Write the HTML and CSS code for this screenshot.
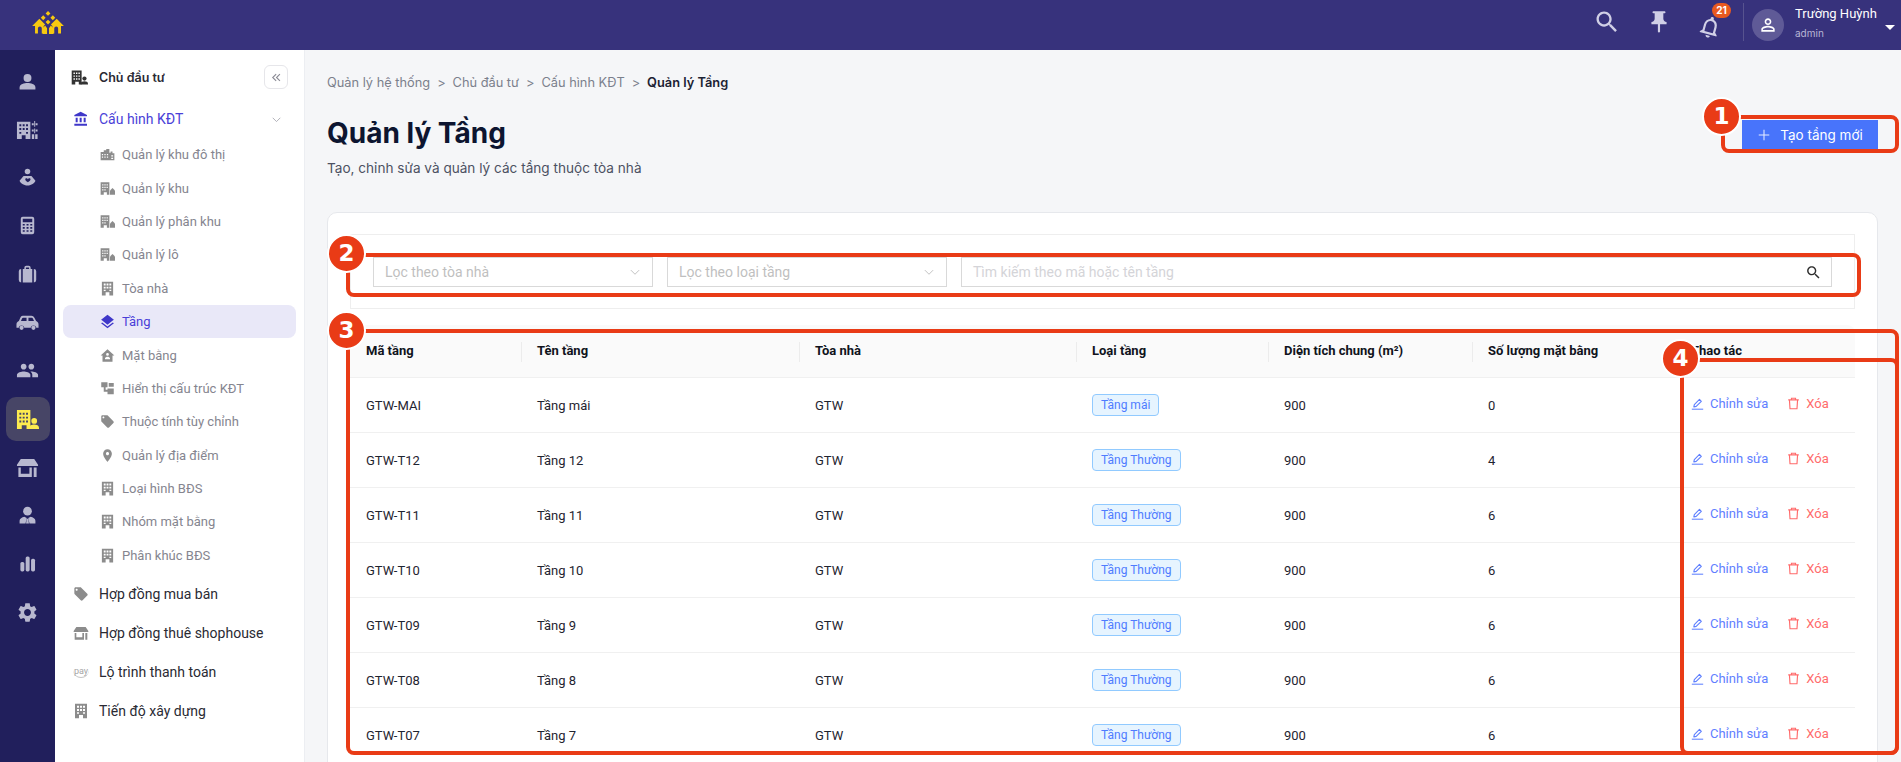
FILE: index.html
```html
<!DOCTYPE html>
<html lang="vi">
  <head>
    <meta charset="UTF-8" />
    <title>Quản lý Tầng</title>
    <link rel="stylesheet" href="styles.css">
  </head>
  <body>
    <svg class="sprite" xmlns="http://www.w3.org/2000/svg">
      <symbol id="i-person" viewBox="0 0 24 24"><circle cx="12" cy="7.500" r="5"/><path d="M2 22v-2.500C2 15.500 8 14 12 14s10 1.500 10 5.500V22z"/></symbol>
      <symbol id="i-city" viewBox="0 0 24 24"><path fill-rule="evenodd" d="M1 4h14v18H10v-4H6v4H1zM3.500 6.500v2h2v-2zm3.500 0v2h2v-2zm3.500 0v2h2v-2zM3.500 10.500v2h2v-2zm3.500 0v2h2v-2zm3.500 0v2h2v-2zM3.500 14.500v2h2v-2zm7 0v2h2v-2z"/><path d="M19 3h1v6h-1zM16.500 5.500h2v2h-2zM20.500 5.500h2v2h-2zM19 11h1v5h-1zM16.500 12h2v2h-2zM20.500 12h2v2h-2zM16.500 17h2.500v5h-2.500zM20 17h2.500v5H20z"/></symbol>
      <symbol id="i-care" viewBox="0 0 24 24"><circle cx="12" cy="4.500" r="3.500"/><path d="M7 10h10l5 6c-1 3-5 6-10 6S3 19 2 16z"/><path fill="#211f5c" d="M14.500 13c-1 0-1.500.6-2 1.200-.5-.6-1-1.200-2-1.200-2 0-2 3 2 5 4-2 4-5 2-5z"/></symbol>
      <symbol id="i-calc" viewBox="0 0 24 24"><path fill-rule="evenodd" d="M6 1h12a2.500 2.500 0 0 1 2.500 2.500v17A2.500 2.500 0 0 1 18 23H6a2.500 2.500 0 0 1-2.500-2.500v-17A2.500 2.500 0 0 1 6 1zm0 2.500V8h12V3.500zM6 10v2h2.500v-2zm4.800 0v2h2.500v-2zm4.700 0v2H18v-2zM6 14v2h2.500v-2zm4.800 0v2h2.500v-2zm4.700 0v2H18v-2zM6 18v2h2.500v-2zm4.800 0v2h2.500v-2zm4.700 0v2H18v-2z"/></symbol>
      <symbol id="i-case" viewBox="0 0 24 24"><path fill-rule="evenodd" d="M8 5V3.500A2.500 2.500 0 0 1 10.500 1h3A2.500 2.500 0 0 1 16 3.500V5h2v17H6V5zm2 0h4V3.500a.5.5 0 0 0-.5-.5h-3a.5.5 0 0 0-.5.5z"/><path d="M1 8a3 3 0 0 1 3-3v17a3 3 0 0 1-3-3zM23 8a3 3 0 0 0-3-3v17a3 3 0 0 0 3-3z"/></symbol>
      <symbol id="i-car" viewBox="0 0 24 24"><path fill-rule="evenodd" d="M7 5h9c1.500 0 2.500.8 3.200 2l1.800 3.500c1.200.6 2.500 1.500 2.500 3.500v3.500h-2.300a3 3 0 0 0-5.900 0H8.700a3 3 0 0 0-5.900 0H.5V14c0-2 1.300-3 2.500-3.500L4.500 7C5 5.800 5.800 5 7 5zm.5 2c-.6 0-1 .3-1.200.8L5.200 10.500h5.800V7zM13 7v3.500h5.800l-1.200-2.800C17.400 7.300 17 7 16.500 7z"/><circle cx="5.800" cy="17.500" r="2.200"/><circle cx="18.200" cy="17.500" r="2.200"/></symbol>
      <symbol id="i-group" viewBox="0 0 24 24"><path d="M16 11c1.660 0 2.990-1.340 2.990-3S17.660 5 16 5c-1.660 0-3 1.340-3 3s1.340 3 3 3zm-8 0c1.660 0 2.990-1.340 2.990-3S9.660 5 8 5C6.340 5 5 6.340 5 8s1.340 3 3 3zm0 2c-2.330 0-7 1.170-7 3.500V19h14v-2.500c0-2.330-4.670-3.500-7-3.500zm8 0c-.29 0-.62.02-.97.05 1.160.84 1.970 1.970 1.970 3.450V19h6v-2.500c0-2.330-4.670-3.500-7-3.500z"/></symbol>
      <symbol id="i-owner" viewBox="0 0 24 24"><path fill-rule="evenodd" d="M1 2h14v20h-4v-4H6v4H1zM3.500 5v2h2V5zm3.500 0v2h2V5zm3.500 0v2h2V5zM3.500 9v2h2V9zM7 9v2h2V9zm3.500 0v2h2V9zM3.500 13v2h2v-2zM7 13v2h2v-2zm3.500 0v2h2v-2z"/><circle cx="19" cy="13.500" r="3"/><path d="M13.500 22v-1.500c0-2 3-3.200 5.500-3.200s5 1.200 5 3.200V22z"/></symbol>
      <symbol id="i-store" viewBox="0 0 24 24"><path fill-rule="evenodd" d="M5 3h14l4 6v1.500H1V9zM2.500 12h14v10h-14zm2.500 0v6.500h9V12zM18.500 12H21.500v10h-3z"/></symbol>
      <symbol id="i-agent" viewBox="0 0 24 24"><circle cx="12" cy="6.500" r="5.500"/><path fill-rule="evenodd" d="M8 13.500l3 1.500-1.500 7H2v-3.500c0-2.500 3-4.500 6-5zM16 13.500l-3 1.500 1.500 7H22v-3.500c0-2.500-3-4.500-6-5zM11 16h2l.8 6h-3.600z"/></symbol>
      <symbol id="i-chart" viewBox="0 0 24 24"><rect x="3" y="10" width="5" height="12" rx="2"/><rect x="9.700" y="3" width="5" height="19" rx="2"/><rect x="16.500" y="6" width="5" height="16" rx="2"/></symbol>
      <symbol id="i-gear" viewBox="0 0 24 24"><path d="M19.140 12.940c.04-.3.06-.61.06-.94 0-.32-.02-.64-.07-.94l2.030-1.580c.18-.14.23-.41.12-.61l-1.920-3.320c-.12-.22-.37-.29-.59-.22l-2.390.96c-.5-.38-1.030-.7-1.620-.94l-.36-2.540c-.04-.24-.24-.41-.48-.41h-3.840c-.24 0-.43.17-.47.41l-.36 2.540c-.59.24-1.130.57-1.620.94l-2.390-.96c-.22-.08-.47 0-.59.22L2.740 8.870c-.12.21-.08.47.12.61l2.030 1.580c-.05.3-.09.63-.09.94s.02.64.07.94l-2.030 1.580c-.18.14-.23.41-.12.61l1.920 3.320c.12.22.37.29.59.22l2.390-.96c.5.38 1.030.7 1.620.94l.36 2.540c.05.24.24.41.48.41h3.840c.24 0 .44-.17.47-.41l.36-2.540c.59-.24 1.130-.56 1.620-.94l2.390.96c.22.08.47 0 .59-.22l1.920-3.320c.12-.22.07-.47-.12-.61l-2.010-1.580zM12 15.600c-1.980 0-3.600-1.620-3.600-3.600s1.620-3.600 3.600-3.600 3.600 1.620 3.600 3.600-1.620 3.600-3.600 3.600z"/></symbol>
      <symbol id="i-search" viewBox="0 0 24 24"><path d="M15.500 14h-.79l-.28-.27C15.410 12.590 16 11.110 16 9.500 16 5.910 13.090 3 9.500 3S3 5.910 3 9.500 5.910 16 9.500 16c1.610 0 3.090-.59 4.230-1.570l.27.28v.79l5 4.990L20.490 19l-4.990-5zm-6 0C7.010 14 5 11.990 5 9.500S7.010 5 9.500 5 14 7.010 14 9.500 11.990 14 9.500 14z"/></symbol>
      <symbol id="i-pin" viewBox="0 0 24 24"><path d="M16 9V4h1c.55 0 1-.45 1-1s-.45-1-1-1H7c-.55 0-1 .45-1 1s.45 1 1 1h1v5c0 1.660-1.340 3-3 3v2h5.970v7l1 1 1-1v-7H19v-2c-1.660 0-3-1.340-3-3z"/></symbol>
      <symbol id="i-bell" viewBox="0 0 24 24"><path d="M12 22c1.100 0 2-.9 2-2h-4c0 1.100.9 2 2 2zm6-6v-5c0-3.070-1.630-5.640-4.500-6.320V4c0-.83-.67-1.500-1.500-1.500s-1.500.67-1.500 1.500v.68C7.640 5.360 6 7.920 6 11v5l-2 2v1h16v-1l-2-2zm-2 1H8v-6c0-2.480 1.510-4.500 4-4.500s4 2.020 4 4.500v6z"/></symbol>
      <symbol id="i-user-line" viewBox="0 0 24 24"><path d="M12 5.900c1.160 0 2.100.94 2.100 2.100s-.94 2.100-2.100 2.100S9.900 9.160 9.900 8s.94-2.100 2.100-2.100m0 9c2.970 0 6.100 1.460 6.100 2.100v1.100H5.900V17c0-.64 3.130-2.100 6.100-2.100M12 4C9.790 4 8 5.790 8 8s1.790 4 4 4 4-1.790 4-4-1.790-4-4-4zm0 9c-2.670 0-8 1.340-8 4v3h16v-3c0-2.660-5.330-4-8-4z"/></symbol>
      <symbol id="i-bank" viewBox="0 0 24 24"><path d="M4 10v7h3v-7H4zm6 0v7h3v-7h-3zM2 22h19v-3H2v3zm14-12v7h3v-7h-3zm-4.500-9L2 6v2h19V6l-9.500-5z"/></symbol>
      <symbol id="i-blocks" viewBox="0 0 24 24"><path fill-rule="evenodd" d="M1 8h5V5h4V3h5v6h2V7h3v3h3v11H1zM3 11v2h2v-2zm4 0v2h2v-2zm4 0v2h2v-2zm7 2v2h3v-2zM3 15v2h2v-2zm4 0v2h2v-2zm4 0v2h2v-2zm7 2v2h3v-2z"/></symbol>
      <symbol id="i-zone" viewBox="0 0 24 24"><path fill-rule="evenodd" d="M1 2h14v20h-4v-4H6v4H1zM3.500 5v2h2V5zm3.500 0v2h2V5zm3.500 0v2h2V5zM3.500 9v2h2V9zM7 9v2h2V9zm3.500 0v2h2V9zM3.500 13v2h2v-2zM7 13v2h2v-2z"/><path d="M16 15l4-4 4 4v7h-8z"/></symbol>
      <symbol id="i-tower" viewBox="0 0 24 24"><path fill-rule="evenodd" d="M3 1h18v22h-6v-5H9v5H3zM6 4v3h3V4zm4.500 0v3h3V4zM15 4v3h3V4zM6 9v3h3V9zm4.500 0v3h3V9zM15 9v3h3V9zM6 14v2h3v-2zm9 0v2h3v-2z"/></symbol>
      <symbol id="i-layers" viewBox="3 1 18 21"><path d="M11.990 18.540l-7.370-5.730L3 14.070l9 7 9-7-1.630-1.270-7.380 5.740zM12 16l7.360-5.730L21 9l-9-7-9 7 1.630 1.270L12 16z"/></symbol>
      <symbol id="i-house" viewBox="0 0 24 24"><path fill-rule="evenodd" d="M12 2l11 10h-3v10H4V12H1zm0 6a2.200 2.200 0 1 0 0 4.400A2.200 2.200 0 0 0 12 8zm-4 10h8v-1.500c0-1.500-2.500-2.500-4-2.500s-4 1-4 2.500z"/></symbol>
      <symbol id="i-tree" viewBox="0 0 24 24"><path fill-rule="evenodd" d="M2 2h10v8H9v4h3v-2h10v9H12v-4H6V10H2zM14 3h8v6h-8z"/></symbol>
      <symbol id="i-tag" viewBox="0 0 24 24"><path d="M21.410 11.580l-9-9C12.050 2.220 11.550 2 11 2H4c-1.100 0-2 .9-2 2v7c0 .55.22 1.050.59 1.420l9 9c.36.36.86.58 1.410.58s1.050-.22 1.410-.59l7-7c.37-.36.59-.86.59-1.410s-.23-1.060-.59-1.420zM5.500 7C4.670 7 4 6.330 4 5.500S4.670 4 5.500 4 7 4.670 7 5.500 6.330 7 5.500 7z"/></symbol>
      <symbol id="i-place" viewBox="0 0 24 24"><path d="M12 2C8.130 2 5 5.130 5 9c0 5.250 7 13 7 13s7-7.750 7-13c0-3.870-3.130-7-7-7zm0 9.500c-1.380 0-2.500-1.120-2.500-2.500s1.120-2.500 2.500-2.500 2.500 1.120 2.500 2.500-1.120 2.500-2.500 2.500z"/></symbol>
      <symbol id="i-edit" viewBox="0 0 16 16"><path d="M1 15h14" fill="none" stroke="currentColor" stroke-width="1.300"/><path d="M3.500 12.200l.6-2.900 6.300-6.300 2.300 2.300-6.300 6.300z" fill="none" stroke="currentColor" stroke-width="1.400" stroke-linejoin="round"/></symbol>
      <symbol id="i-trash" viewBox="0 0 16 16"><path d="M1.500 3.500h13M5.500 3.500V1.500h5v2M3 3.500l.7 11h8.600l.7-11" fill="none" stroke="currentColor" stroke-width="1.400"/></symbol>
    </svg>

    <header class="topbar">
      <svg class="logo" viewBox="0 0 34 26">
        <path d="M16.500 0l2.500 2.500-2.500 2.500L14 2.500zM11.500 4.500L14 7l-2.500 2.500L9 7zM21.500 4.500L24 7l-2.500 2.500L19 7zM16.500 9l2.500 2.500-2.500 2.500-2.500-2.500zM7.500 8l6 6-1.500 1.500v8H3v-8H0zM25.500 8l7.500 7.500h-3v8h-9v-8L19.500 14z"/>
        <path class="logo-door" d="M6 24v-6a2 2 0 0 1 4 0v6zM23 24v-6a2 2 0 0 1 4 0v6z"/>
        <path d="M11 24v-6l2.500-3 2 3v6zM17.500 24v-6l2-3 2.500 3v6z"/>
      </svg>
      <div class="topbar-tools">
        <svg class="tool-icon tool-search"><use href="#i-search"/></svg>
        <svg class="tool-icon"><use href="#i-pin"/></svg>
        <div class="bell">
          <svg class="tool-icon tilt"><use href="#i-bell"/></svg>
          <span class="bell-count">21</span>
        </div>
        <div class="user">
          <div class="avatar"><svg><use href="#i-user-line"/></svg></div>
          <div class="user-text">
            <div class="user-name">Trường Huỳnh</div>
            <div class="user-role">admin</div>
          </div>
          <span class="caret"></span>
        </div>
      </div>
    </header>

    <div class="shell">
      <nav class="rail">
        <a class="rail-item"><svg><use href="#i-person"/></svg></a>
        <a class="rail-item wide"><svg><use href="#i-city"/></svg></a>
        <a class="rail-item"><svg><use href="#i-care"/></svg></a>
        <a class="rail-item"><svg><use href="#i-calc"/></svg></a>
        <a class="rail-item"><svg><use href="#i-case"/></svg></a>
        <a class="rail-item wide"><svg><use href="#i-car"/></svg></a>
        <a class="rail-item wide"><svg><use href="#i-group"/></svg></a>
        <a class="rail-item wide active"><svg><use href="#i-owner"/></svg></a>
        <a class="rail-item wide"><svg><use href="#i-store"/></svg></a>
        <a class="rail-item"><svg><use href="#i-agent"/></svg></a>
        <a class="rail-item"><svg><use href="#i-chart"/></svg></a>
        <a class="rail-item wide"><svg><use href="#i-gear"/></svg></a>
      </nav>

      <aside class="side">
        <div class="side-head">
          <svg class="side-head-icon"><use href="#i-owner"/></svg>
          <span>Chủ đầu tư</span>
          <button class="collapse">
            <svg viewBox="0 0 16 16"><path d="M7.500 3L2.500 8l5 5M13 3L8 8l5 5"/></svg>
          </button>
        </div>
        <div class="menu-item open">
          <svg class="menu-icon"><use href="#i-bank"/></svg>
          <span>Cấu hình KĐT</span>
          <svg class="chev" viewBox="0 0 16 16"><path d="M2.500 5.500L8 11l5.500-5.500"/></svg>
        </div>
        <ul class="sub">
          <li><svg><use href="#i-blocks"/></svg>Quản lý khu đô thị</li>
          <li><svg><use href="#i-zone"/></svg>Quản lý khu</li>
          <li><svg><use href="#i-zone"/></svg>Quản lý phân khu</li>
          <li><svg><use href="#i-zone"/></svg>Quản lý lô</li>
          <li><svg><use href="#i-tower"/></svg>Tòa nhà</li>
          <li class="current"><svg><use href="#i-layers"/></svg>Tầng</li>
          <li><svg><use href="#i-house"/></svg>Mặt bằng</li>
          <li><svg><use href="#i-tree"/></svg>Hiển thị cấu trúc KĐT</li>
          <li><svg><use href="#i-tag"/></svg>Thuộc tính tùy chỉnh</li>
          <li><svg><use href="#i-place"/></svg>Quản lý địa điểm</li>
          <li><svg><use href="#i-tower"/></svg>Loại hình BĐS</li>
          <li><svg><use href="#i-tower"/></svg>Nhóm mặt bằng</li>
          <li><svg><use href="#i-tower"/></svg>Phân khúc BĐS</li>
        </ul>
        <div class="menu-item">
          <svg class="menu-icon"><use href="#i-tag"/></svg>
          <span>Hợp đồng mua bán</span>
        </div>
        <div class="menu-item">
          <svg class="menu-icon"><use href="#i-store"/></svg>
          <span>Hợp đồng thuê shophouse</span>
        </div>
        <div class="menu-item">
          <span class="pay">pay</span>
          <span>Lộ trình thanh toán</span>
        </div>
        <div class="menu-item">
          <svg class="menu-icon"><use href="#i-tower"/></svg>
          <span>Tiến độ xây dựng</span>
        </div>
      </aside>

      <main class="page">
        <div class="crumbs">
          <span>Quản lý hệ thống</span><i>&gt;</i>
          <span>Chủ đầu tư</span><i>&gt;</i>
          <span>Cấu hình KĐT</span><i>&gt;</i>
          <b>Quản lý Tầng</b>
        </div>
        <div class="page-head">
          <div>
            <h1>Quản lý Tầng</h1>
            <p>Tạo, chỉnh sửa và quản lý các tầng thuộc tòa nhà</p>
          </div>
          <button class="btn-new"><svg viewBox="0 0 16 16"><path d="M8 2v12M2 8h12"/></svg>Tạo tầng mới</button>
        </div>

        <section class="card">
          <div class="filters">
            <div class="field select">Lọc theo tòa nhà<svg viewBox="0 0 16 16"><path d="M2.500 5.500L8 11l5.500-5.500"/></svg></div>
            <div class="field select">Lọc theo loại tầng<svg viewBox="0 0 16 16"><path d="M2.500 5.500L8 11l5.500-5.500"/></svg></div>
            <div class="field search">Tìm kiếm theo mã hoặc tên tầng<svg><use href="#i-search"/></svg></div>
          </div>

          <table class="floors">
            <colgroup>
              <col class="c1"><col class="c2"><col class="c3"><col class="c4"><col class="c5"><col class="c6"><col class="c7">
            </colgroup>
            <thead>
              <tr>
                <th>Mã tầng</th><th>Tên tầng</th><th>Tòa nhà</th><th>Loại tầng</th><th>Diện tích chung (m²)</th><th>Số lượng mặt bằng</th><th>Thao tác</th>
              </tr>
            </thead>
            <tbody>
              <tr>
                <td>GTW-MAI</td><td>Tầng mái</td><td>GTW</td><td><span class="tag">Tầng mái</span></td><td>900</td><td>0</td>
                <td><div class="acts"><a class="edit"><svg><use href="#i-edit"/></svg>Chỉnh sửa</a><a class="del"><svg><use href="#i-trash"/></svg>Xóa</a></div></td>
              </tr>
              <tr>
                <td>GTW-T12</td><td>Tầng 12</td><td>GTW</td><td><span class="tag">Tầng Thường</span></td><td>900</td><td>4</td>
                <td><div class="acts"><a class="edit"><svg><use href="#i-edit"/></svg>Chỉnh sửa</a><a class="del"><svg><use href="#i-trash"/></svg>Xóa</a></div></td>
              </tr>
              <tr>
                <td>GTW-T11</td><td>Tầng 11</td><td>GTW</td><td><span class="tag">Tầng Thường</span></td><td>900</td><td>6</td>
                <td><div class="acts"><a class="edit"><svg><use href="#i-edit"/></svg>Chỉnh sửa</a><a class="del"><svg><use href="#i-trash"/></svg>Xóa</a></div></td>
              </tr>
              <tr>
                <td>GTW-T10</td><td>Tầng 10</td><td>GTW</td><td><span class="tag">Tầng Thường</span></td><td>900</td><td>6</td>
                <td><div class="acts"><a class="edit"><svg><use href="#i-edit"/></svg>Chỉnh sửa</a><a class="del"><svg><use href="#i-trash"/></svg>Xóa</a></div></td>
              </tr>
              <tr>
                <td>GTW-T09</td><td>Tầng 9</td><td>GTW</td><td><span class="tag">Tầng Thường</span></td><td>900</td><td>6</td>
                <td><div class="acts"><a class="edit"><svg><use href="#i-edit"/></svg>Chỉnh sửa</a><a class="del"><svg><use href="#i-trash"/></svg>Xóa</a></div></td>
              </tr>
              <tr>
                <td>GTW-T08</td><td>Tầng 8</td><td>GTW</td><td><span class="tag">Tầng Thường</span></td><td>900</td><td>6</td>
                <td><div class="acts"><a class="edit"><svg><use href="#i-edit"/></svg>Chỉnh sửa</a><a class="del"><svg><use href="#i-trash"/></svg>Xóa</a></div></td>
              </tr>
              <tr>
                <td>GTW-T07</td><td>Tầng 7</td><td>GTW</td><td><span class="tag">Tầng Thường</span></td><td>900</td><td>6</td>
                <td><div class="acts"><a class="edit"><svg><use href="#i-edit"/></svg>Chỉnh sửa</a><a class="del"><svg><use href="#i-trash"/></svg>Xóa</a></div></td>
              </tr>
            </tbody>
          </table>
        </section>
      </main>
    </div>

    <!-- annotation marks drawn on top of the screen -->
    <div class="mark-box box1"></div>
    <div class="mark-box box2"></div>
    <div class="mark-box box3"></div>
    <div class="mark-box box4"></div>
    <div class="mark-num num1">1</div>
    <div class="mark-num num2">2</div>
    <div class="mark-num num3">3</div>
    <div class="mark-num num4">4</div>
  </body>
</html>
```

FILE: styles.css
```css
* {
  box-sizing: border-box;
}
html,
body {
  height: 100%;
}
body {
  position: relative;
  margin: 0;
  overflow: hidden;
  font-family: Inter, "Noto Sans", sans-serif;
  font-size: 13px;
  color: #1c2233;
  background: #f5f6f8;
}
.sprite {
  display: none;
}

/* top bar */
.topbar {
  display: flex;
  align-items: center;
  justify-content: space-between;
  height: 50px;
  padding-left: 32px;
  background: #37327c;
}
.logo {
  width: 33px;
  height: 25px;
  margin-top: -3px;
  fill: #f7c910;
}
.logo-door {
  fill: #37327c;
}
.topbar-tools {
  display: flex;
  align-items: center;
  height: 50px;
}
.tool-icon {
  display: block;
  width: 26px;
  height: 26px;
  margin-right: 25px;
  margin-top: -6px;
  fill: #d0cfe6;
}
.tool-search {
  width: 28px;
  height: 28px;
}
.tilt {
  transform: rotate(15deg);
}
.bell {
  position: relative;
  margin-top: 3px;
}
.bell .tool-icon {
  margin-right: 20px;
  margin-top: 0;
}
.bell-count {
  position: absolute;
  top: -11px;
  left: 15px;
  min-width: 19px;
  height: 15px;
  padding: 0 3px;
  border-radius: 8px;
  background: #e8591f;
  color: #fff;
  font-size: 10px;
  font-weight: 700;
  line-height: 15px;
  text-align: center;
}
.user {
  display: flex;
  align-items: center;
  width: 158px;
  height: 38px;
  margin-top: -6px;
  padding-left: 8px;
  border-left: 1px solid #57538f;
}
.avatar {
  display: flex;
  align-items: center;
  justify-content: center;
  width: 32px;
  height: 32px;
  margin-top: 6px;
  border-radius: 50%;
  background: #5f5a97;
}
.avatar svg {
  width: 20px;
  height: 20px;
  fill: #fff;
}
.user-text {
  margin-left: 11px;
  flex: 1;
}
.user-name {
  color: #fff;
  font-family: Roboto, sans-serif;
  font-size: 13px;
  line-height: 18px;
}
.user-role {
  margin-top: 3px;
  color: #b8b6d4;
  font-size: 10px;
  line-height: 14px;
}
.caret {
  width: 0;
  height: 0;
  margin: 10px 6px 0 0;
  border-left: 5px solid transparent;
  border-right: 5px solid transparent;
  border-top: 5px solid #fff;
}

/* layout */
.shell {
  display: flex;
  height: calc(100% - 50px);
}

/* icon rail */
.rail {
  display: flex;
  flex-direction: column;
  align-items: center;
  gap: 4.300px;
  flex: 0 0 55px;
  padding-top: 9px;
  background: #211f5c;
}
.rail-item {
  display: flex;
  align-items: center;
  justify-content: center;
  width: 44px;
  height: 44px;
  border-radius: 10px;
}
.rail-item svg {
  width: 19px;
  height: 19px;
  fill: #b8b8cf;
}
.rail-item.wide svg {
  width: 23px;
  height: 23px;
}
.rail-item.active {
  background: #474566;
}
.rail-item.active svg {
  fill: #fdeb4f;
}

/* tree menu */
.side {
  flex: 0 0 250px;
  font-family: Roboto, sans-serif;
  background: #fff;
  border-right: 1px solid #eceef2;
}
.side-head {
  display: flex;
  align-items: center;
  height: 38px;
  margin-top: 8px;
  padding-left: 16px;
  font-family: Inter, sans-serif;
  font-weight: 600;
  font-size: 12.500px;
  color: #2a2a33;
}
.side-head-icon {
  width: 17px;
  height: 17px;
  margin-right: 11px;
  fill: #333;
}
.collapse {
  display: flex;
  align-items: center;
  justify-content: center;
  width: 24px;
  height: 24px;
  margin-left: auto;
  margin-right: 16px;
  padding: 0;
  background: #fff;
  border: 1px solid #e6e6ea;
  border-radius: 6px;
}
.collapse svg {
  width: 11px;
  height: 11px;
  fill: none;
  stroke: #8a8a94;
  stroke-width: 1.600;
}
.menu-item {
  display: flex;
  align-items: center;
  height: 39px;
  padding-left: 18px;
  font-size: 14px;
  color: #2a2a33;
}
.menu-item.open {
  height: 38px;
  margin-top: 4px;
  color: #4a3fd8;
}
.menu-icon {
  flex: 0 0 16px;
  width: 16px;
  height: 16px;
  margin-right: 10px;
  fill: #8c8c8c;
}
.open .menu-icon {
  fill: #3f37c9;
}
.chev {
  width: 11px;
  height: 11px;
  margin-left: auto;
  margin-right: 22px;
  fill: none;
  stroke: #a9a9b2;
  stroke-width: 1.300;
}
.pay {
  position: relative;
  flex: 0 0 16px;
  margin-right: 10px;
  color: #a5a5a5;
  font-size: 9px;
  line-height: 12px;
  text-align: center;
  border-bottom: 1px solid #c4c4c4;
  border-radius: 0 0 10px 10px;
}
.sub {
  margin: 0 0 2px;
  padding: 0;
  list-style: none;
}
.sub li {
  display: flex;
  align-items: center;
  height: 33.400px;
  margin: 0 8px;
  padding-left: 37px;
  border-radius: 8px;
  color: #85858f;
  font-size: 13px;
}
.sub svg {
  flex: 0 0 15px;
  width: 15px;
  height: 15px;
  margin-right: 7px;
  fill: #8c8c8c;
}
.sub .current {
  background: #e9e8f8;
  color: #4a3fd8;
}
.sub .current svg {
  fill: #3f37c9;
}

/* page */
.page {
  flex: 1;
  min-width: 0;
  height: 100%;
  padding: 24px 23px 0 22px;
  overflow: hidden;
}
.crumbs {
  display: flex;
  align-items: center;
  height: 16px;
  color: #7b808c;
  font-size: 12.800px;
}
.crumbs i {
  margin: 0 7px;
  font-style: normal;
}
.crumbs b {
  color: #1c2233;
  font-weight: 600;
}
.page-head {
  display: flex;
  align-items: flex-start;
  justify-content: space-between;
  height: 122px;
}
.page-head h1 {
  margin: 25px 0 0;
  color: #0d1530;
  font-size: 28px;
  font-weight: 700;
  line-height: 36px;
}
.page-head p {
  margin: 7px 0 0;
  color: #4c5162;
  font-size: 13.600px;
  line-height: 20px;
}
.btn-new {
  display: flex;
  align-items: center;
  justify-content: center;
  width: 136px;
  height: 29px;
  margin-top: 30px;
  padding: 0;
  border: 0;
  background: #4874fb;
  color: #fff;
  font-family: inherit;
  font-size: 13.500px;
}
.btn-new svg {
  width: 14px;
  height: 14px;
  margin-right: 9px;
  fill: none;
  stroke: #e5ebff;
  stroke-width: 1.200;
}

/* card with filters and table, runs on below the fold */
.card {
  height: 560px;
  padding: 21px 22px 0;
  overflow: hidden;
  background: #fff;
  border: 1px solid #e6e8ec;
  border-radius: 10px 10px 0 0;
}
.filters {
  display: flex;
  gap: 14px;
  height: 75px;
  padding: 22px;
  border: 1px solid #eeeeee;
}
.field {
  display: flex;
  align-items: center;
  justify-content: space-between;
  height: 30px;
  padding: 0 11px;
  border: 1px solid #d9d9d9;
  color: #bfbfbf;
  font-family: Roboto, sans-serif;
  font-size: 14px;
}
.select {
  flex: 0 0 280px;
}
.select svg {
  width: 12px;
  height: 12px;
  fill: none;
  stroke: #b5b5b5;
  stroke-width: 1.100;
}
.search {
  flex: 1;
  color: #d4d4d8;
}
.search svg {
  width: 17px;
  height: 17px;
  margin-right: -2px;
  fill: #2d2d2d;
}
.floors {
  width: 1505px;
  margin-top: 16px;
  border-collapse: separate;
  border-spacing: 0;
  font-family: Roboto, sans-serif;
  table-layout: fixed;
}
.c1 { width: 171px; }
.c2 { width: 278px; }
.c3 { width: 277px; }
.c4 { width: 192px; }
.c5 { width: 204px; }
.c6 { width: 203px; }
.c7 { width: 180px; }
.floors th {
  position: relative;
  height: 53px;
  padding: 0 16px 2px;
  background: #fafafa;
  border-bottom: 1px solid #f0f0f0;
  color: #10131c;
  font-size: 13px;
  font-weight: 700;
  text-align: left;
}
.floors th:first-child {
  border-top-left-radius: 8px;
}
.floors th:last-child {
  border-top-right-radius: 8px;
}
.floors th + th::before {
  content: "";
  position: absolute;
  left: 0;
  top: 17px;
  height: 20px;
  border-left: 1px solid #ececec;
}
.floors td {
  height: 55px;
  padding: 0 16px;
  border-bottom: 1px solid #f0f0f0;
  color: #1f2430;
  font-size: 13px;
}
.tag {
  display: inline-block;
  height: 22px;
  padding: 0 8px;
  background: #e6f4ff;
  border: 1px solid #91caff;
  border-radius: 4px;
  color: #4f7cff;
  font-size: 12px;
  line-height: 20px;
}
.acts {
  display: flex;
  align-items: center;
  gap: 19px;
  margin-top: -4px;
}
.acts a {
  display: flex;
  align-items: center;
}
.acts svg {
  width: 13px;
  height: 13px;
  margin-right: 6px;
}
.edit {
  color: #5f80ff;
}
.del {
  color: #ff6b6b;
}

/* annotation marks */
.mark-box {
  position: absolute;
  border: 4px solid #e93b16;
  border-radius: 8px;
}
.box1 { left: 1721px; top: 115px; width: 178px; height: 38px; }
.box2 { left: 346px; top: 253px; width: 1515px; height: 44px; }
.box3 { left: 346px; top: 329px; width: 1553px; height: 426px; }
.box4 { left: 1680px; top: 358px; width: 219px; height: 397px; }
.mark-num {
  position: absolute;
  width: 39px;
  height: 39px;
  border: 2px solid #fff;
  border-radius: 50%;
  background: #e93b16;
  color: #fff;
  font-family: "DejaVu Sans", sans-serif;
  font-size: 23px;
  font-weight: 700;
  line-height: 35px;
  text-align: center;
}
.num1 { left: 1702px; top: 97px; }
.num2 { left: 327px; top: 234px; }
.num3 { left: 327px; top: 311px; }
.num4 { left: 1661px; top: 339px; }
```
